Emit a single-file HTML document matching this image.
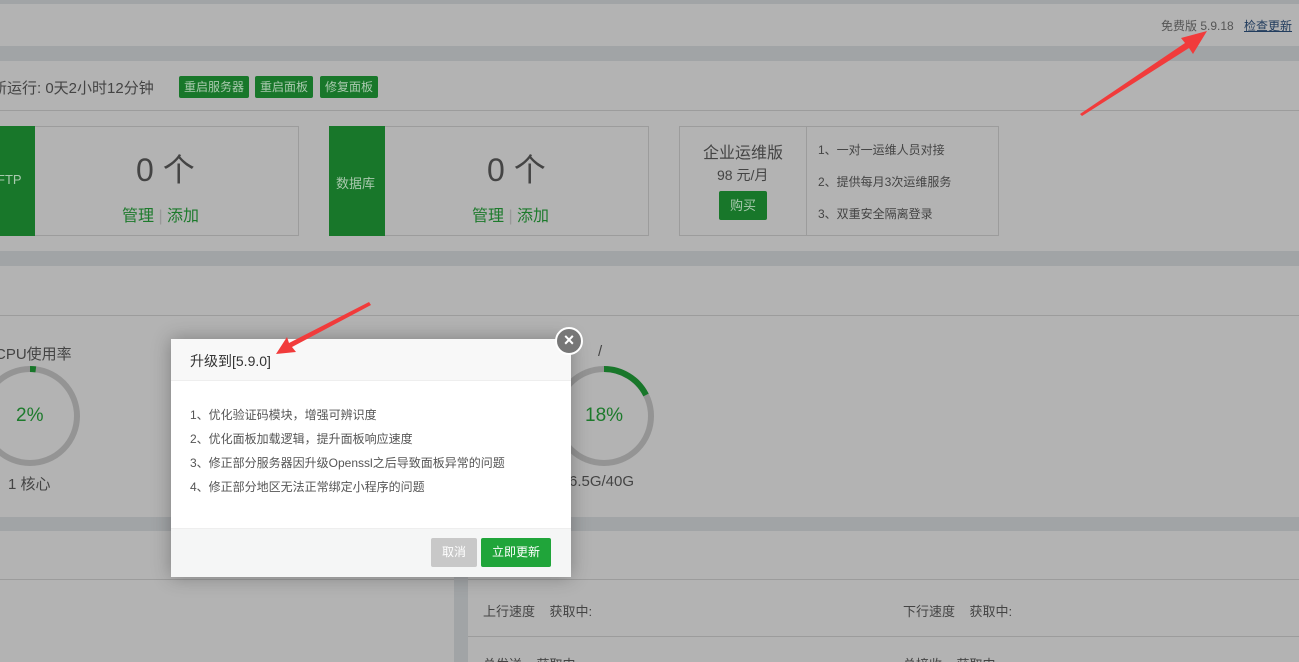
<!DOCTYPE html>
<html><head><meta charset="utf-8"><style>
*{margin:0;padding:0;box-sizing:border-box}
html,body{width:1299px;height:662px;overflow:hidden}
body{background:#a1a4a6;font-family:"Liberation Sans","Noto Sans CJK SC",sans-serif;position:relative;color:#444}
.p{position:absolute;background:#b3b3b3}
.a{position:absolute;white-space:nowrap}
.hl{position:absolute;height:1px;background:#9c9c9c}
.btn{position:absolute;background:#18772a;color:#a9c9ae;font-size:12px;height:22px;line-height:22px;padding:0 5px;border-radius:2px}
.box{position:absolute;border:1px solid #9c9c9c}
.g{color:#1d7a2c}
</style></head><body>
<div class="p" style="left:0;top:4px;width:1299px;height:42px"></div>
<div class="a" style="left:1161px;top:17px;font-size:12px;color:#555">免费版 5.9.18</div>
<div class="a" style="left:1244px;top:17px;font-size:12px;color:#223d5e;text-decoration:underline">检查更新</div>

<div class="p" style="left:0;top:61px;width:1299px;height:190px"></div>
<div class="hl" style="left:0;top:110px;width:1299px"></div>
<div class="a" style="left:-8px;top:77px;font-size:15px;color:#444">新运行: 0天2小时12分钟</div>
<div class="btn" style="left:179px;top:76px">重启服务器</div>
<div class="btn" style="left:255px;top:76px">重启面板</div>
<div class="btn" style="left:320px;top:76px">修复面板</div>

<div class="box" style="left:-1px;top:126px;width:300px;height:110px"></div>
<div class="p" style="left:0;top:126px;width:35px;height:110px;background:#18772a"></div>
<div class="a" style="left:-3px;top:172px;font-size:13px;color:#a9c9ae">FTP</div>
<div class="a" style="left:136px;top:145px;font-size:32px;color:#444">0 个</div>
<div class="a g" style="left:122px;top:202px;font-size:16px">管理 <span style="color:#999">|</span> 添加</div>

<div class="box" style="left:329px;top:126px;width:320px;height:110px"></div>
<div class="p" style="left:329px;top:126px;width:56px;height:110px;background:#18772a"></div>
<div class="a" style="left:336px;top:173px;font-size:13px;color:#a9c9ae">数据库</div>
<div class="a" style="left:487px;top:145px;font-size:32px;color:#444">0 个</div>
<div class="a g" style="left:472px;top:202px;font-size:16px">管理 <span style="color:#999">|</span> 添加</div>

<div class="box" style="left:679px;top:126px;width:320px;height:110px"></div>
<div class="p" style="left:806px;top:126px;width:1px;height:110px;background:#9c9c9c"></div>
<div class="a" style="left:703px;top:139px;font-size:16px;color:#444">企业运维版</div>
<div class="a" style="left:717px;top:165px;font-size:14px;color:#444">98 元/月</div>
<div class="btn" style="left:719px;top:191px;height:29px;line-height:29px;padding:0 11px;font-size:13px">购买</div>
<div class="a" style="left:818px;top:141px;font-size:12px;color:#444">1、一对一运维人员对接</div>
<div class="a" style="left:818px;top:173px;font-size:12px;color:#444">2、提供每月3次运维服务</div>
<div class="a" style="left:818px;top:205px;font-size:12px;color:#444">3、双重安全隔离登录</div>

<div class="p" style="left:0;top:266px;width:1299px;height:251px"></div>
<div class="hl" style="left:0;top:315px;width:1299px"></div>
<div class="a" style="left:-5px;top:343px;font-size:15px;color:#444">CPU使用率</div>
<div class="a" style="left:598px;top:343px;font-size:15px;color:#444">/</div>
<svg class="a" style="left:0;top:0" width="1299" height="662">
<circle cx="30" cy="416" r="47" fill="none" stroke="#949494" stroke-width="6"/>
<path d="M30 369 A47 47 0 0 1 35.8 369.4" fill="none" stroke="#18772a" stroke-width="6"/>
<circle cx="604" cy="416" r="47" fill="none" stroke="#949494" stroke-width="6"/>
<path d="M604 369 A47 47 0 0 1 646 395" fill="none" stroke="#18772a" stroke-width="6"/>
</svg>
<div class="a g" style="left:16px;top:405px;font-size:19px">2%</div>
<div class="a g" style="left:585px;top:405px;font-size:19px">18%</div>
<div class="a" style="left:8px;top:473px;font-size:15px;color:#444">1 核心</div>
<div class="a" style="left:569px;top:473px;font-size:15px;color:#444">6.5G/40G</div>

<div class="p" style="left:0;top:531px;width:454px;height:131px"></div>
<div class="p" style="left:468px;top:531px;width:831px;height:131px"></div>
<div class="hl" style="left:0;top:579px;width:454px"></div>
<div class="hl" style="left:468px;top:579px;width:831px"></div>
<div class="hl" style="left:468px;top:636px;width:831px"></div>
<div class="a" style="left:483px;top:601px;font-size:13px;color:#444">上行速度&nbsp;&nbsp;&nbsp;&nbsp;获取中:</div>
<div class="a" style="left:903px;top:601px;font-size:13px;color:#444">下行速度&nbsp;&nbsp;&nbsp;&nbsp;获取中:</div>
<div class="a" style="left:483px;top:654px;font-size:13px;color:#444">总发送&nbsp;&nbsp;&nbsp;&nbsp;获取中</div>
<div class="a" style="left:903px;top:654px;font-size:13px;color:#444">总接收&nbsp;&nbsp;&nbsp;&nbsp;获取中</div>

<div class="a" style="left:171px;top:339px;width:400px;height:238px;background:#fff;box-shadow:0 0 18px rgba(0,0,0,.3)">
 <div style="height:42px;background:#f8f8f8;border-bottom:1px solid #eee;padding:12px 0 0 19px;font-size:14px;color:#333">升级到[5.9.0]</div>
 <div style="padding:22px 0 0 19px;font-size:12px;color:#555;line-height:24px">
  1、优化验证码模块，增强可辨识度<br>2、优化面板加载逻辑，提升面板响应速度<br>3、修正部分服务器因升级Openssl之后导致面板异常的问题<br>4、修正部分地区无法正常绑定小程序的问题
 </div>
 <div style="position:absolute;left:0;top:189px;width:400px;height:49px;background:#f5f6f6;border-top:1px solid #eee"></div>
 <div style="position:absolute;left:260px;top:199px;width:46px;height:29px;background:#c8c8c8;color:#fff;font-size:12px;text-align:center;line-height:29px;border-radius:2px">取消</div>
 <div style="position:absolute;left:310px;top:199px;width:70px;height:29px;background:#20a53a;color:#fff;font-size:12px;text-align:center;line-height:29px;border-radius:2px">立即更新</div>
</div>
<div class="a" style="left:555px;top:327px;width:28px;height:28px;border-radius:50%;background:#777;border:2px solid #fff;color:#fff;font-size:18px;text-align:center;line-height:23px;font-weight:bold">×</div>

<svg class="a" style="left:0;top:0" width="1299" height="662">
<polygon points="1080,114 1185,43 1181,38 1207,31 1193,54 1189,48 1082,116" fill="#f13b3b"/>
<polygon points="371,305 292,347 296,352 276,354 287,337 289,343 369,302" fill="#f13b3b"/>
</svg>
</body></html>
